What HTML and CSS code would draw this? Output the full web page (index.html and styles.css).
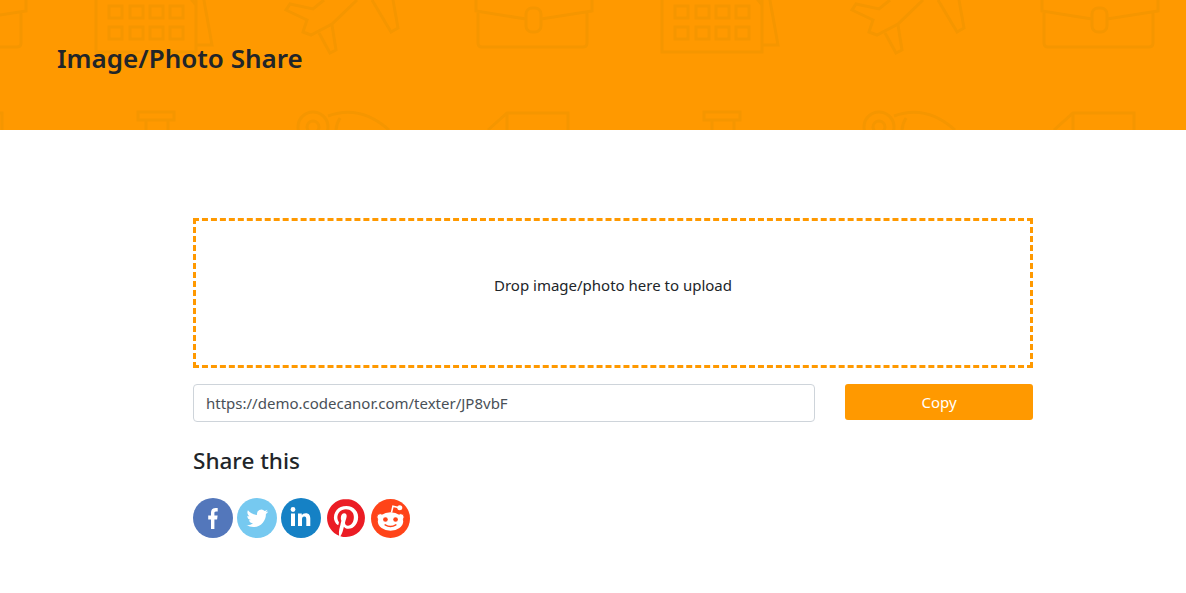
FILE: index.html
```html
<!DOCTYPE html>
<html lang="en">
<head>
  <meta charset="UTF-8">
  <meta name="viewport" content="width=device-width, initial-scale=1.0">
  <title>Image/Photo Share</title>
  <link rel="stylesheet" href="styles.css">
</head>
<body>
  <header class="banner">
    <!-- doodle pattern behind the banner title -->
    <svg class="banner-pattern" width="1186" height="130" viewBox="0 0 1186 130" aria-hidden="true">
      <defs>
        <g id="tile">
          <path d="M196 -5V52H96V-5M196 5L188 -5M196 45H212L203 -5"/>
          <g class="solid">
            <rect x="109" y="6" width="13" height="12"/><rect x="130" y="6" width="13" height="12"/>
            <rect x="150" y="6" width="13" height="12"/><rect x="170" y="6" width="13" height="12"/>
            <rect x="109" y="27" width="13" height="12"/><rect x="130" y="27" width="13" height="12"/>
            <rect x="150" y="27" width="13" height="12"/><rect x="170" y="27" width="13" height="12"/>
          </g>
          <path d="M324 0L313 9L290 4L286 10L307 20L303 32L311 35L332 24L357 0M319 33L330 53L336 50L332 25M372 0L391 32L398 28L393 0"/>
          <path d="M476 0V11L526 19M541 19L592 11V0M478 13V43Q478 47 482 47H583Q587 47 587 43V13"/>
          <rect x="526" y="8" width="15" height="24" rx="6"/>
          <path d="M138 112H174V120H138ZM146 120V135M168 120V135"/>
          <circle cx="313" cy="127" r="15"/>
          <circle cx="313" cy="127" r="6"/>
          <path d="M328 116Q360 104 389 130M340 118Q336 124 336 132"/>
          <path d="M488 130L507 113H568V132M507 113V132"/>
        </g>
      </defs>
      <g class="doodles">
        <use href="#tile" x="-566"/>
        <use href="#tile"/>
        <use href="#tile" x="566"/>
      </g>
    </svg>
    <h1 class="banner-title">Image/Photo Share</h1>
  </header>

  <main class="content">
    <div class="dropzone">Drop image/photo here to upload</div>

    <div class="link-row">
      <input class="link-input" type="text" value="https://demo.codecanor.com/texter/JP8vbF">
      <button class="copy-btn">Copy</button>
    </div>

    <h4 class="share-title">Share this</h4>

    <div class="share-icons">
      <a class="share-icon" href="#" aria-label="Facebook">
        <svg width="40" height="40" viewBox="0 0 40 40">
          <circle cx="20" cy="20" r="20" fill="#5377bb"/>
          <path fill="#fff" d="M18 31V21.400H15.200V17.600H18V14.800C18 11.600 19.700 9.900 22.500 9.900C23.600 9.900 24.400 10 24.700 10V13.400H23C21.700 13.400 21.400 14.100 21.400 15.200V17.600H24.600L24.100 21.400H21.400V31Z"/>
        </svg>
      </a>
      <a class="share-icon" href="#" aria-label="Twitter">
        <svg width="40" height="40" viewBox="0 0 40 40">
          <circle cx="20" cy="20" r="20" fill="#76c9f0"/>
          <path fill="#fff" transform="translate(9.5 9.5) scale(.9)" d="M23.953 4.57a10 10 0 01-2.825.775 4.958 4.958 0 002.163-2.723c-.951.555-2.005.959-3.127 1.184a4.92 4.92 0 00-8.384 4.482C7.69 8.095 4.067 6.13 1.64 3.162a4.822 4.822 0 00-.666 2.475c0 1.71.87 3.213 2.188 4.096a4.904 4.904 0 01-2.228-.616v.06a4.923 4.923 0 003.946 4.827 4.996 4.996 0 01-2.212.085 4.936 4.936 0 004.604 3.417 9.867 9.867 0 01-6.102 2.105c-.39 0-.779-.023-1.17-.067a13.995 13.995 0 007.557 2.209c9.053 0 13.998-7.496 13.998-13.985 0-.21 0-.42-.015-.63A9.935 9.935 0 0024 4.59z"/>
        </svg>
      </a>
      <a class="share-icon" href="#" aria-label="LinkedIn">
        <svg width="40" height="40" viewBox="0 0 40 40">
          <circle cx="20" cy="20" r="20" fill="#1581c5"/>
          <circle cx="12" cy="11.5" r="2.4" fill="#fff"/>
          <rect x="10" y="15.5" width="4" height="12.5" fill="#fff"/>
          <path fill="#fff" d="M17 15.5h3.8v1.8c.7-1.2 2-2.1 3.900-2.100 3.400 0 4.600 2.200 4.600 5.400V28h-4v-6.600c0-1.600-.4-2.900-2-2.900s-2.300 1.300-2.300 3V28h-4z"/>
        </svg>
      </a>
      <a class="share-icon share-icon-pin" href="#" aria-label="Pinterest">
        <svg width="38" height="38" viewBox="0 0 24 24">
          <circle cx="12" cy="12" r="11" fill="#fff"/>
          <path fill="#eb1c24" d="M12.017 0C5.396 0 .029 5.367.029 11.987c0 5.079 3.158 9.417 7.618 11.162-.105-.949-.199-2.403.041-3.439.219-.937 1.406-5.957 1.406-5.957s-.359-.72-.359-1.781c0-1.663.967-2.911 2.168-2.911 1.024 0 1.518.769 1.518 1.688 0 1.029-.653 2.567-.992 3.992-.285 1.193.6 2.165 1.775 2.165 2.128 0 3.768-2.245 3.768-5.487 0-2.861-2.063-4.869-5.008-4.869-3.41 0-5.409 2.562-5.409 5.199 0 1.033.394 2.143.889 2.741.099.12.112.225.085.345-.09.375-.293 1.199-.334 1.363-.053.225-.172.271-.401.165-1.495-.69-2.433-2.878-2.433-4.646 0-3.776 2.748-7.252 7.92-7.252 4.158 0 7.392 2.967 7.392 6.923 0 4.135-2.607 7.462-6.233 7.462-1.214 0-2.354-.629-2.758-1.379l-.749 2.848c-.269 1.045-1.004 2.352-1.498 3.146 1.123.345 2.306.535 3.55.535 6.607 0 11.985-5.365 11.985-11.987C23.97 5.39 18.592.026 11.985.026L12.017 0z"/>
        </svg>
      </a>
      <a class="share-icon share-icon-reddit" href="#" aria-label="Reddit">
        <svg width="39" height="39" viewBox="0 0 40 40">
          <circle cx="20" cy="20" r="20" fill="#ff4419"/>
          <path d="M21 14L22.500 7.500L28 8.800" fill="none" stroke="#fff" stroke-width="1.600"/>
          <circle cx="29.500" cy="9" r="2.600" fill="#fff"/>
          <circle cx="9.500" cy="18.500" r="3.500" fill="#fff" stroke="#ff4419"/>
          <circle cx="30.500" cy="18.500" r="3.500" fill="#fff" stroke="#ff4419"/>
          <ellipse cx="20" cy="23" rx="13" ry="9.500" fill="#fff"/>
          <circle cx="14.800" cy="21" r="2.400" fill="#ff4419"/>
          <circle cx="25.200" cy="21" r="2.400" fill="#ff4419"/>
          <path d="M14.500 26.500Q20 30 25.500 26.500" fill="none" stroke="#ff4419" stroke-width="1.500" stroke-linecap="round"/>
        </svg>
      </a>
    </div>
  </main>
</body>
</html>
```

FILE: styles.css
```css
* {
  box-sizing: border-box;
}

body {
  margin: 0;
  background: #fff;
  color: #212529;
  font-family: "Noto Sans", "Open Sans", sans-serif;
  font-size: 15px;
}

.banner {
  position: relative;
  height: 130px;
  padding: 37px 0 0 57px;
  background-color: #f90;
  overflow: hidden;
}

.banner-pattern {
  position: absolute;
  top: 0;
  left: 0;
}

.doodles {
  fill: none;
  stroke: #f59600;
  stroke-width: 3;
}

.doodles .solid {
  fill: #f59600;
  stroke: none;
}

.banner-title {
  position: relative;
  margin: 0;
  font-size: 26px;
  font-weight: 600;
  line-height: 42px;
  color: #212529;
}

.content {
  width: 840px;
  margin: 88px 0 0 193px;
}

.dropzone {
  height: 150px;
  padding-top: 52px;
  border: 3px dashed #f90;
  text-align: center;
  font-size: 15px;
  line-height: 24px;
}

.link-row {
  display: flex;
  align-items: flex-start;
  gap: 30px;
  margin-top: 16px;
}

.link-input {
  width: 622px;
  height: 38px;
  padding: 0 12px;
  border: 1px solid #ced4da;
  border-radius: 4px;
  color: #495057;
  font-family: inherit;
  font-size: 15px;
}

.copy-btn {
  width: 188px;
  height: 36px;
  border: none;
  border-radius: 3px;
  background: #f90;
  color: #fff;
  font-family: inherit;
  font-size: 15px;
}

.share-title {
  margin: 23px 0 0;
  font-size: 22.5px;
  font-weight: 500;
  line-height: 32px;
}

.share-icons {
  display: flex;
  gap: 4px;
  margin-top: 21px;
}

.share-icon {
  display: block;
  height: 40px;
}

.share-icon svg {
  display: block;
}

.share-icon-pin {
  margin: 1px 0 0 2px;
}

.share-icon-reddit {
  margin: 1px 0 0 2px;
}
```
